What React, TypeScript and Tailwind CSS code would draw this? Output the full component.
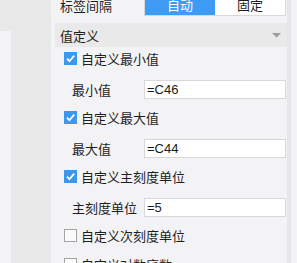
import type { ReactNode } from 'react'

const cjk = "font-['Noto_Sans_CJK_SC','Microsoft_YaHei',sans-serif]"

function Box({ checked }: { checked: boolean }) {
  if (!checked) {
    return <span className="block h-[13px] w-[13px] shrink-0 border border-[#a3a3a3] bg-[#fbfbfb]" />
  }
  return (
    <span className="flex h-[13px] w-[13px] shrink-0 items-center justify-center bg-[#3c97ee]">
      <svg width="11" height="11" viewBox="0 0 11 11">
        <path d="M2 5.6 L4.4 8.2 L9.2 2.6" fill="none" stroke="#fff" strokeWidth="1.7" />
      </svg>
    </span>
  )
}

function CheckRow({ checked, children }: { checked: boolean; children: ReactNode }) {
  return (
    <div className="flex h-[29px] shrink-0 items-start gap-[4px] pl-[9px] pt-[5px]">
      <Box checked={checked} />
      <span className="text-[13px] leading-[13px] text-[#1e1e1e]">{children}</span>
    </div>
  )
}

function FieldRow({ label, value }: { label: string; value: string }) {
  return (
    <div className="flex h-[30px] shrink-0 items-start pt-[4px]">
      <span className="w-[89px] shrink-0 pl-[17px] pt-[3px] text-[13px] leading-[13px] text-[#1e1e1e]">{label}</span>
      <div className="flex h-[19px] w-[142px] items-center border border-[#d8d8d8] bg-white pl-[2px] font-['Liberation_Sans',Arial,sans-serif] text-[13px] text-[#1a1a1a]">
        {value}
      </div>
    </div>
  )
}

export default function App() {
  return (
    <div className={`flex h-[263px] w-[297px] overflow-hidden bg-[#f3f3f5] ${cjk}`}>
      <div className="flex w-[11px] shrink-0 flex-col">
        <div className="h-[31px] shrink-0 bg-[#e8e8e8]" />
      </div>
      <div className="w-[40px] shrink-0 bg-[#e8e8e8]" />
      <div className="flex w-[236px] shrink-0 flex-col pl-[4px]">
        <div className="mt-[-6px] flex h-[22px] shrink-0 items-center">
          <span className="w-[89px] shrink-0 pl-[5px] text-[13px] leading-[13px] text-[#1e1e1e]">标签间隔</span>
          <div className="flex h-[22px] w-[142px] border border-[#d9d9d9] text-[13px]">
            <span className="flex flex-1 items-center justify-center bg-[#3d9bf4] text-white">自动</span>
            <span className="flex flex-1 items-center justify-center bg-white text-[#1e1e1e]">固定</span>
          </div>
        </div>
        <div className="mt-[7px] flex h-[24px] shrink-0 items-center justify-between bg-[#e9e9ea] pl-[5px] pr-[6px]">
          <span className="text-[13px] leading-[13px] text-[#1e1e1e]">值定义</span>
          <svg width="9" height="5" viewBox="0 0 9 5">
            <path d="M0 0 H9 L4.5 4.5 Z" fill="#9a9a9a" />
          </svg>
        </div>
        <CheckRow checked>自定义最小值</CheckRow>
        <FieldRow label="最小值" value="=C46" />
        <CheckRow checked>自定义最大值</CheckRow>
        <FieldRow label="最大值" value="=C44" />
        <CheckRow checked>自定义主刻度单位</CheckRow>
        <FieldRow label="主刻度单位" value="=5" />
        <CheckRow checked={false}>自定义次刻度单位</CheckRow>
        <CheckRow checked={false}>自定义对数底数</CheckRow>
      </div>
      <div className="flex w-[10px] shrink-0">
        <div className="w-[4px] bg-[#e6e6e6]" />
      </div>
    </div>
  )
}
